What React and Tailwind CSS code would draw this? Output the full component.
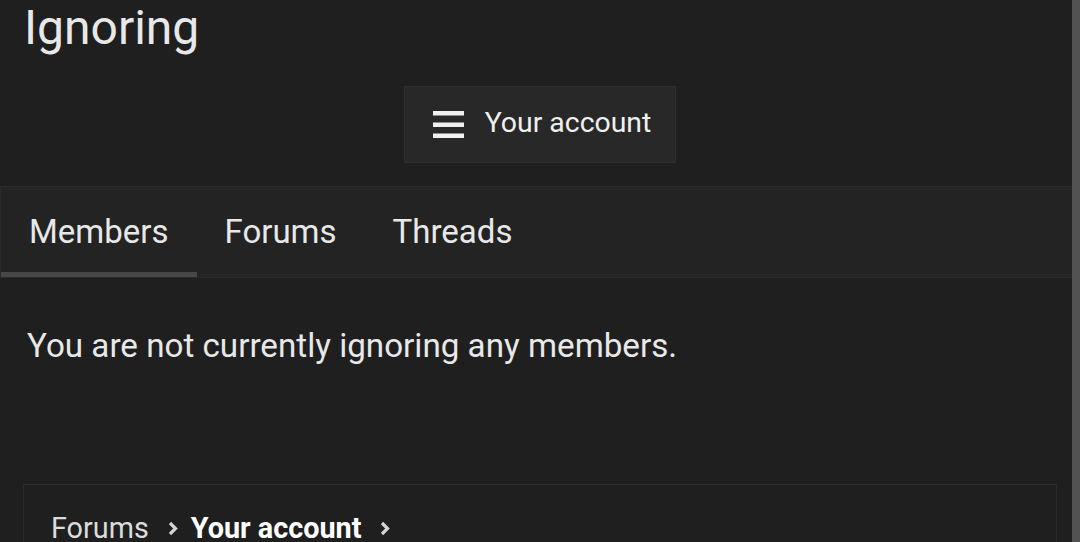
import React from "react";

const tabs = ["Members", "Forums", "Threads"];

const Chevron = ({ className }) => (
  <svg width="10" height="15" viewBox="0 0 10 15" className={className}>
    <path d="M2 2 L7.5 7.5 L2 13" fill="none" stroke="#d4d4d4" strokeWidth="3.2" />
  </svg>
);

const App = () => {
  return (
    <div className="relative min-h-screen overflow-hidden bg-[#1f1f1f] text-[#e8e8e8] font-['Roboto',sans-serif]">
      <h1 className="mt-[3px] px-[24px] text-[48px] leading-[50px] font-normal">Ignoring</h1>

      <div className="mt-[33px] flex justify-center">
        <button className="flex h-[77px] items-center border border-[#2e2e2e] bg-[#282828] pl-[28px] pr-[24px]">
          <svg width="31" height="27" viewBox="0 0 31 27" className="mr-[21px]">
            <rect x="0" y="0" width="31" height="4.5" fill="#f0f0f0" />
            <rect x="0" y="11.5" width="31" height="4.5" fill="#f0f0f0" />
            <rect x="0" y="22.5" width="31" height="4.5" fill="#f0f0f0" />
          </svg>
          <span className="pb-[4px] text-[28.4px] leading-[28px] text-[#f0f0f0]">Your account</span>
        </button>
      </div>

      <div className="mt-[23px] flex border-y border-l border-[#2a2a2a] bg-[#232323]">
        {tabs.map((tab, i) => (
          <div
            key={tab}
            className={
              i === 0
                ? "border-b-[5px] border-[#474747] px-[28px] pt-[28px] pb-[24px] text-[33px] leading-[33px]"
                : "border-b-[5px] border-transparent px-[28px] pt-[28px] pb-[24px] text-[33px] leading-[33px]"
            }
          >
            {tab}
          </div>
        ))}
      </div>

      <p className="mt-[52px] px-[27px] text-[33.2px] leading-[32px]">
        You are not currently ignoring any members.
      </p>

      <div className="mx-[23px] mt-[122px] border border-[#2b2b2b] px-[27px] pt-[29px] pb-[20px]">
        <div className="flex items-center text-[28.8px] leading-[28px]">
          <span className="text-[#dcdcdc]">Forums</span>
          <Chevron className="ml-[19px] mr-[13px] shrink-0" />
          <span className="font-bold text-white">Your account</span>
          <Chevron className="ml-[19px] shrink-0" />
        </div>
      </div>

      <div className="absolute right-0 top-0 h-full w-[8px] bg-[#525252]" />
    </div>
  );
};

export default App;
